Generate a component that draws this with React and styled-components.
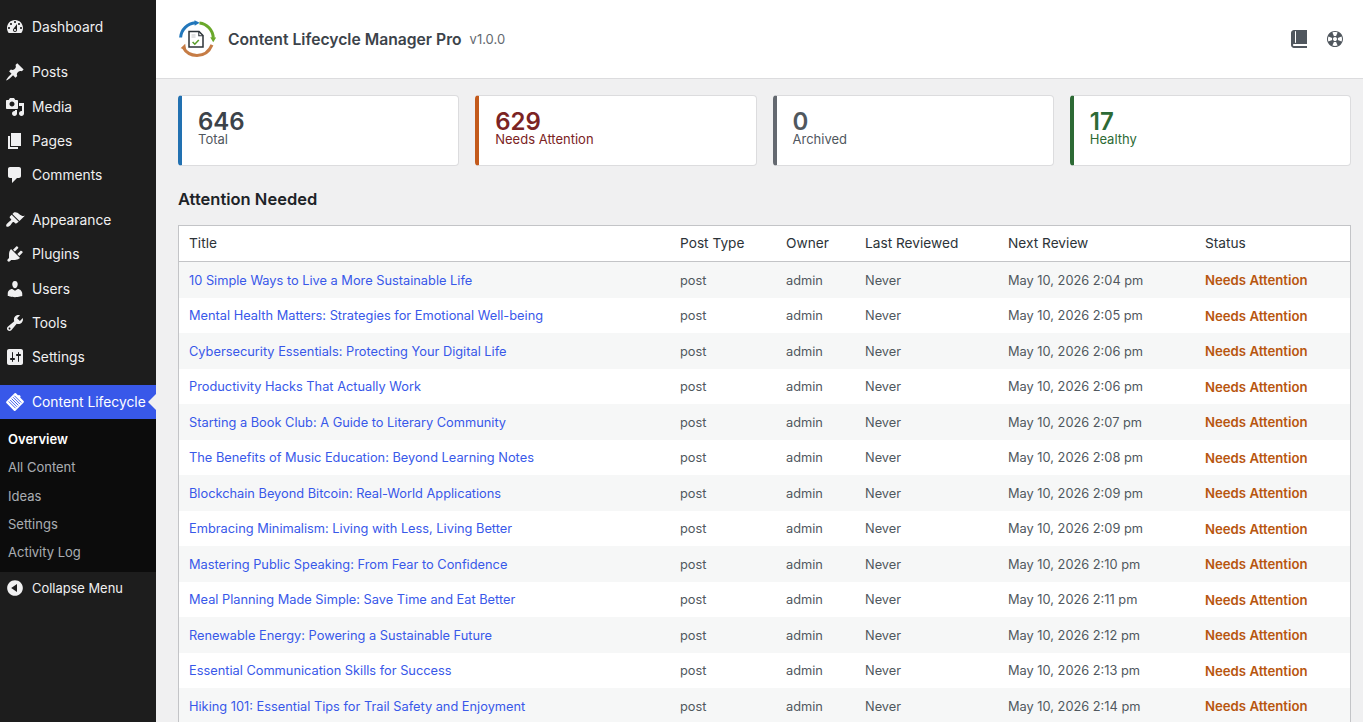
import React from "react"
import styled, { createGlobalStyle } from "styled-components"

const GlobalStyle = createGlobalStyle`
  html, body {
    margin: 0;
    height: 100%;
    overflow: hidden;
    background: #f0f0f1;
    font-family: Inter, "Liberation Sans", sans-serif;
  }
`

const icons = {
  dashboard:
    "M3.76 16h12.48c1.1-1.37 1.76-3.11 1.76-5 0-4.42-3.58-8-8-8s-8 3.58-8 8c0 1.89.66 3.63 1.76 5zM10 4c.55 0 1 .45 1 1s-.45 1-1 1-1-.45-1-1 .45-1 1-1zM6 6c.55 0 1 .45 1 1s-.45 1-1 1-1-.45-1-1 .45-1 1-1zm8 0c.55 0 1 .45 1 1s-.45 1-1 1-1-.45-1-1 .45-1 1-1zm-5.37 5.55L12 7v6c0 1.1-.9 2-2 2s-2-.9-2-2c0-.57.24-1.08.63-1.45zM4 10c.55 0 1 .45 1 1s-.45 1-1 1-1-.45-1-1 .45-1 1-1zm12 0c.55 0 1 .45 1 1s-.45 1-1 1-1-.45-1-1 .45-1 1-1zm-5 3c0-.55-.45-1-1-1s-1 .45-1 1 .45 1 1 1 1-.45 1-1z",
  post: "M10.44 3.02l1.82-1.82 6.36 6.35-1.83 1.82c-1.05-.68-2.48-.57-3.41.36l-.75.75c-.92.93-1.04 2.35-.35 3.41l-1.83 1.82-2.41-2.41-2.8 2.79c-.42.42-3.38 2.71-3.8 2.29s1.86-3.39 2.28-3.81l2.79-2.79L4.1 9.36l1.83-1.82c1.05.69 2.48.57 3.4-.36l.75-.75c.93-.92 1.05-2.35.36-3.41z",
  media:
    "M13 11V4c0-.55-.45-1-1-1h-1.67L9 1H5L3.67 3H2c-.55 0-1 .45-1 1v7c0 .55.45 1 1 1h10c.55 0 1-.45 1-1zM7 4.5c1.38 0 2.5 1.12 2.5 2.5S8.38 9.5 7 9.5 4.5 8.38 4.5 7 5.62 4.5 7 4.5zM14 6h5v10.5c0 1.38-1.12 2.5-2.5 2.5S14 17.88 14 16.5s1.12-2.5 2.5-2.5c.17 0 .34.02.5.05V9h-3V6zm-4 8.05V13h2v3.5c0 1.38-1.12 2.5-2.5 2.5S7 17.88 7 16.5 8.12 14 9.5 14c.17 0 .34.02.5.05z",
  page: "M6 15V2h10v13H6zm-1 1h8v2H3V5h2v11z",
  comments:
    "M5 2h9c1.1 0 2 .9 2 2v7c0 1.1-.9 2-2 2h-2l-5 5v-5H5c-1.1 0-2-.9-2-2V4c0-1.1.9-2 2-2z",
  appearance:
    "M14.48 11.06L7.41 3.99l1.5-1.5c.5-.56 2.3-.47 3.51.32 1.21.8 1.43 1.28 2.91 2.1 1.18.64 2.45 1.26 4.45.85zm-.71.71L6.7 4.7 4.93 6.47c-.39.39-.39 1.02 0 1.41l1.06 1.06c.39.39.39 1.03 0 1.42-.6.6-1.43 1.11-2.21 1.69-.35.26-.7.53-1.01.84C1.43 13.71.96 15.12 1.27 16.57c1.45.31 2.86-.16 3.87-1.16.31-.31.58-.66.84-1.01.58-.78 1.09-1.61 1.69-2.21.39-.39 1.03-.39 1.42 0l1.06 1.06c.39.39 1.02.39 1.41 0z",
  plugins:
    "M13.11 4.36L9.87 7.6 8 5.73l3.24-3.24c.35-.34 1.05-.2 1.56.32.52.51.66 1.21.31 1.55zm-8 1.77l.91-1.12 9.01 9.01-1.19.84c-.71.71-2.63 1.16-3.82 1.16H6.14L4.9 17.26c-.59.59-1.54.59-2.12 0-.59-.58-.59-1.53 0-2.12l1.24-1.24v-3.88c0-1.13.4-3.19 1.09-3.89zm7.26 3.97l3.24-3.24c.34-.35 1.04-.21 1.55.31.52.51.66 1.21.31 1.55l-3.24 3.25z",
  users:
    "M10 9.25c-2.27 0-2.73-3.44-2.73-3.44C7 4.02 7.82 2 9.97 2c2.16 0 2.98 2.02 2.71 3.81 0 0-.41 3.44-2.68 3.44zm0 2.57L12.72 10c2.39 0 4.52 2.33 4.52 4.53v2.49s-3.65 1.13-7.24 1.13c-3.65 0-7.24-1.13-7.24-1.13v-2.49c0-2.25 1.94-4.48 4.47-4.48z",
  tools:
    "M16.68 9.77c-1.34 1.34-3.3 1.67-4.95.99l-5.41 6.52c-.99.99-2.59.99-3.58 0s-.99-2.59 0-3.57l6.52-5.42c-.68-1.65-.35-3.61.99-4.95 1.28-1.28 3.12-1.62 4.72-1.06l-2.89 2.89 2.82 2.82 2.86-2.87c.53 1.58.18 3.39-1.08 4.65zM3.81 16.21c.4.39 1.04.39 1.43 0 .4-.4.4-1.04 0-1.43-.39-.4-1.03-.4-1.43 0-.39.39-.39 1.03 0 1.43z",
  settings:
    "M18 16V4c0-1.1-.9-2-2-2H4c-1.1 0-2 .9-2 2v12c0 1.1.9 2 2 2h12c1.1 0 2-.9 2-2zM8 11h1c.55 0 1 .45 1 1s-.45 1-1 1H8v1.5c0 .28-.22.5-.5.5s-.5-.22-.5-.5V13H6c-.55 0-1-.45-1-1s.45-1 1-1h1V5.5c0-.28.22-.5.5-.5s.5.22.5.5V11zm5-2h-1c-.55 0-1-.45-1-1s.45-1 1-1h1V5.5c0-.28.22-.5.5-.5s.5.22.5.5V7h1c.55 0 1 .45 1 1s-.45 1-1 1h-1v5.5c0 .28-.22.5-.5.5s-.5-.22-.5-.5V9z",
  collapse:
    "M10 2.16c4.33 0 7.84 3.51 7.84 7.84s-3.51 7.84-7.84 7.84S2.16 14.33 2.16 10 5.71 2.16 10 2.16zm2 11.72V6.12L6.18 9.97z",
  book: "M5 17h13v2H5c-1.66 0-3-1.34-3-3V4c0-1.66 1.34-3 3-3h13v14H5c-.55 0-1 .45-1 1s.45 1 1 1zm2-3.5v-11c0-.28-.22-.5-.5-.5s-.5.22-.5.5v11c0 .28.22.5.5.5s.5-.22.5-.5z",
  sos: "M18 10c0-4.42-3.58-8-8-8s-8 3.58-8 8 3.58 8 8 8 8-3.58 8-8zM7.23 3.57L8.72 7.3c-.62.29-1.13.8-1.42 1.42L3.57 7.23c.71-1.64 2.02-2.95 3.66-3.66zm9.2 3.66L12.7 8.72c-.29-.62-.8-1.13-1.42-1.42l1.49-3.73c1.64.71 2.95 2.02 3.66 3.66zM10 12c-1.1 0-2-.9-2-2s.9-2 2-2 2 .9 2 2-.9 2-2 2zm-6.43.77l3.73-1.49c.29.62.8 1.13 1.42 1.42l-1.49 3.73c-1.64-.71-2.95-2.02-3.66-3.66zm9.2 3.66l-1.49-3.73c.62-.29 1.13-.8 1.42-1.42l3.73 1.49c-.71 1.64-2.02 2.95-3.66 3.66z",
}

const Icon = ({ name, size = 20, turn = 0 }) => (
  <svg width={size} height={size} viewBox="0 0 20 20" fill="currentColor">
    <path d={icons[name]} transform={`rotate(${turn} 10 10)`} />
  </svg>
)

const LifecycleIcon = () => (
  <svg width="20" height="20" viewBox="0 0 20 20">
    <g transform="rotate(45 10 10)">
      <rect x="3.6" y="3.2" width="12.8" height="13.6" rx="1" fill="#fff" />
      <path
        d="M5.2 6h9.6M5.2 8h9.6M5.2 10h9.6M5.2 12h9.6M5.2 14h9.6"
        stroke="#3858e9"
        strokeWidth="0.9"
      />
    </g>
    <circle cx="14" cy="4.6" r="1.5" fill="#fff" />
  </svg>
)

const Logo = () => (
  <svg width="38" height="38" viewBox="0 0 38 38" fill="none">
    <path d="M2.6 17.5C3.2 9.5 9.5 3.4 17.5 2.8" stroke="#2277bb" strokeWidth="3" />
    <path d="M16.5 0.2l5.2 2.6-5 3z" fill="#2277bb" />
    <path d="M21.5 3C29 3.8 34.8 10 35.3 17.8" stroke="#6aa82a" strokeWidth="3" />
    <path d="M32.2 17.2l6 .2-3 4.8z" fill="#6aa82a" />
    <path d="M34 24.8C31.2 31.4 25.6 35.4 19 35.4 13 35.4 7.6 32 5 27" stroke="#c67c45" strokeWidth="3" />
    <path d="M2.6 28.2l4.6-4.4.8 5.4z" fill="#c67c45" />
    <path d="M11 11.5h10l4 4v11.5H11z" fill="#fff" stroke="#2c3338" strokeWidth="1.5" />
    <path d="M20.8 11.8v3.9h4" stroke="#2c3338" strokeWidth="1.1" />
    <path d="M13.5 15h4M13.5 17h4" stroke="#c3c4c7" strokeWidth="1" />
    <path d="M14.6 22l2.2 2.2 4-4.2" stroke="#5a9e2b" strokeWidth="1.6" />
  </svg>
)

const Shell = styled.div`
  display: flex;
  min-height: 100vh;
`

const Sidebar = styled.nav`
  flex: 0 0 156px;
  padding-top: 10.2px;
  background: #1d1d1d;
  color: #f0f0f1;
`

const MenuItem = styled.div`
  position: relative;
  display: flex;
  align-items: center;
  height: 34.2px;
  padding-left: 5px;
  font-size: 13.8px;
  background: ${props => (props.$active ? "#3858e9" : "transparent")};
  color: ${props => (props.$active ? "#fff" : "#f0f0f1")};

  ${props =>
    props.$active &&
    `&::after {
      content: "";
      position: absolute;
      right: 0;
      top: 50%;
      margin-top: -8px;
      border: 8px solid transparent;
      border-right-color: #f0f0f1;
      border-left-width: 0;
    }`}
`

const MenuIcon = styled.span`
  display: flex;
  width: 27px;
  color: #f0f0f1;
`

const MenuGap = styled.div`
  height: 11px;
`

const SubMenu = styled.div`
  display: flex;
  flex-direction: column;
  padding: 6px 0;
  background: #0c0c0c;
`

const SubItem = styled.div`
  height: 28.2px;
  line-height: 28px;
  padding-left: 8px;
  font-size: 13px;
  font-weight: ${props => (props.$current ? 600 : 400)};
  color: ${props => (props.$current ? "#fff" : "rgba(240, 246, 252, 0.7)")};
`

const CollapseRow = styled(MenuItem)`
  height: 32px;
  font-size: 12.9px;
`

const Main = styled.main`
  flex: 1;
  min-width: 0;
`

const Header = styled.header`
  display: flex;
  align-items: center;
  height: 78px;
  padding: 0 18px 0 22px;
  background: #fff;
  border-bottom: 1px solid #dcdcde;
`

const BrandTitle = styled.h1`
  margin: 0 0 0 12px;
  font-size: 15.7px;
  font-weight: 600;
  color: #3c434a;
`

const Version = styled.span`
  margin-left: 8px;
  font-size: 13px;
  color: #646970;
`

const HeaderActions = styled.div`
  display: flex;
  gap: 16px;
  margin-left: auto;
  color: #50575e;
`

const Body = styled.div`
  padding: 16px 12px 0 22px;
`

const Cards = styled.div`
  display: grid;
  grid-template-columns: repeat(4, 1fr);
  gap: 16px;
`

const Card = styled.div`
  box-sizing: border-box;
  height: 71px;
  padding: 15px 16px 0 16px;
  background: #fff;
  border: 1px solid #dcdcde;
  border-left: 4px solid ${props => props.$accent};
  border-radius: 4px;
`

const CardValue = styled.div`
  font-size: 24px;
  font-weight: 600;
  line-height: 21px;
  color: ${props => props.$color};
`

const CardLabel = styled.div`
  font-size: 13px;
  line-height: 14px;
  color: ${props => props.$color};
`

const SectionTitle = styled.h2`
  margin: 23px 0 16px;
  font-size: 16.5px;
  line-height: 20px;
  font-weight: 600;
  color: #1d2327;
`

const Table = styled.table`
  width: 100%;
  table-layout: fixed;
  border-collapse: separate;
  border-spacing: 0;
  background: #fff;
  border: 1px solid #c3c4c7;
  font-size: 12.8px;
`

const HeadCell = styled.th`
  box-sizing: border-box;
  height: 36px;
  padding: 0 10px 2px;
  text-align: left;
  font-size: 13.7px;
  font-weight: 400;
  color: #2c3338;
  border-bottom: 1px solid #c3c4c7;
`

const Row = styled.tr`
  height: 35.5px;
  background: ${props => (props.$odd ? "#f6f7f7" : "#fff")};
`

const Cell = styled.td`
  padding: 2px 10px 0;
  line-height: 16px;
  color: #50575e;
`

const TitleLink = styled.a`
  color: #3858e9;
  text-decoration: none;
`

const Status = styled.span`
  font-weight: 600;
  font-size: 13.2px;
  vertical-align: 0.4px;
  color: #b8560f;
`

const menuTop = [
  ["dashboard", "Dashboard"],
  null,
  ["post", "Posts"],
  ["media", "Media"],
  ["page", "Pages"],
  ["comments", "Comments"],
  null,
  ["appearance", "Appearance"],
  ["plugins", "Plugins"],
  ["users", "Users"],
  ["tools", "Tools"],
  ["settings", "Settings"],
  null,
]

const subItems = ["Overview", "All Content", "Ideas", "Settings", "Activity Log"]

const stats = [
  { value: "646", label: "Total", accent: "#2271b1", color: "#3c434a", labelColor: "#50575e" },
  { value: "629", label: "Needs Attention", accent: "#c35a1c", color: "#7b2323", labelColor: "#7b2323" },
  { value: "0", label: "Archived", accent: "#646970", color: "#50575e", labelColor: "#50575e" },
  { value: "17", label: "Healthy", accent: "#2d6a35", color: "#2d6a35", labelColor: "#2d6a35" },
]

const columns = [
  ["Title", 491],
  ["Post Type", 106],
  ["Owner", 79],
  ["Last Reviewed", 143],
  ["Next Review", 197],
  ["Status", 155],
]

const rows = [
  ["10 Simple Ways to Live a More Sustainable Life", "2:04"],
  ["Mental Health Matters: Strategies for Emotional Well-being", "2:05"],
  ["Cybersecurity Essentials: Protecting Your Digital Life", "2:06"],
  ["Productivity Hacks That Actually Work", "2:06"],
  ["Starting a Book Club: A Guide to Literary Community", "2:07"],
  ["The Benefits of Music Education: Beyond Learning Notes", "2:08"],
  ["Blockchain Beyond Bitcoin: Real-World Applications", "2:09"],
  ["Embracing Minimalism: Living with Less, Living Better", "2:09"],
  ["Mastering Public Speaking: From Fear to Confidence", "2:10"],
  ["Meal Planning Made Simple: Save Time and Eat Better", "2:11"],
  ["Renewable Energy: Powering a Sustainable Future", "2:12"],
  ["Essential Communication Skills for Success", "2:13"],
  ["Hiking 101: Essential Tips for Trail Safety and Enjoyment", "2:14"],
]

const App = () => (
  <Shell>
    <GlobalStyle />
    <Sidebar>
      {menuTop.map((item, i) =>
        item ? (
          <MenuItem key={item[1]}>
            <MenuIcon>
              <Icon name={item[0]} />
            </MenuIcon>
            {item[1]}
          </MenuItem>
        ) : (
          <MenuGap key={i} />
        )
      )}
      <MenuItem $active>
        <MenuIcon>
          <LifecycleIcon />
        </MenuIcon>
        Content Lifecycle
      </MenuItem>
      <SubMenu>
        {subItems.map((label, i) => (
          <SubItem key={label} $current={i === 0}>
            {label}
          </SubItem>
        ))}
      </SubMenu>
      <CollapseRow>
        <MenuIcon>
          <Icon name="collapse" />
        </MenuIcon>
        Collapse Menu
      </CollapseRow>
    </Sidebar>
    <Main>
      <Header>
        <Logo />
        <BrandTitle>Content Lifecycle Manager Pro</BrandTitle>
        <Version>v1.0.0</Version>
        <HeaderActions>
          <Icon name="book" />
          <Icon name="sos" turn={45} />
        </HeaderActions>
      </Header>
      <Body>
        <Cards>
          {stats.map(stat => (
            <Card key={stat.label} $accent={stat.accent}>
              <CardValue $color={stat.color}>{stat.value}</CardValue>
              <CardLabel $color={stat.labelColor}>{stat.label}</CardLabel>
            </Card>
          ))}
        </Cards>
        <SectionTitle>Attention Needed</SectionTitle>
        <Table>
          <colgroup>
            {columns.map(([name, width]) => (
              <col key={name} width={width} />
            ))}
          </colgroup>
          <thead>
            <tr>
              {columns.map(([name]) => (
                <HeadCell key={name}>{name}</HeadCell>
              ))}
            </tr>
          </thead>
          <tbody>
            {rows.map(([title, time], i) => (
              <Row key={title} $odd={i % 2 === 0}>
                <Cell>
                  <TitleLink href="#">{title}</TitleLink>
                </Cell>
                <Cell>post</Cell>
                <Cell>admin</Cell>
                <Cell>Never</Cell>
                <Cell>May 10, 2026 {time} pm</Cell>
                <Cell>
                  <Status>Needs Attention</Status>
                </Cell>
              </Row>
            ))}
          </tbody>
        </Table>
      </Body>
    </Main>
  </Shell>
)

export default App
